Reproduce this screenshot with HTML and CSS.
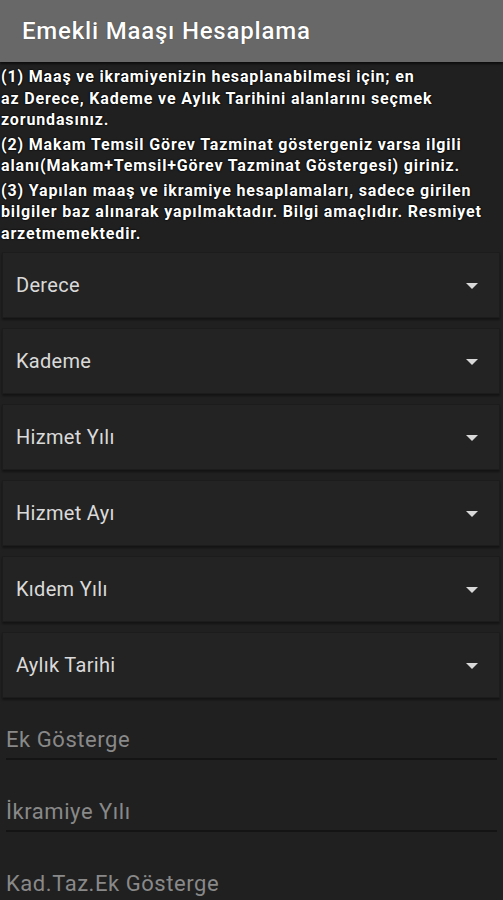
FILE: index.html
```html
<!DOCTYPE html>
<html lang="tr">
<head>
<meta charset="utf-8">
<title>Emekli Maaşı Hesaplama</title>
<link rel="stylesheet" href="styles.css">
</head>
<body>
<header class="appbar">
  <h1 class="appbar-title">Emekli Maaşı Hesaplama</h1>
</header>
<main class="content">
  <section class="info">
    <p>(1) Maaş ve ikramiyenizin hesaplanabilmesi için; en<br>az Derece, Kademe ve Aylık Tarihini alanlarını seçmek<br>zorundasınız.</p>
    <p>(2) Makam Temsil Görev Tazminat göstergeniz varsa ilgili<br>alanı(Makam+Temsil+Görev Tazminat Göstergesi) giriniz.</p>
    <p>(3) Yapılan maaş ve ikramiye hesaplamaları, sadece girilen<br>bilgiler baz alınarak yapılmaktadır. Bilgi amaçlıdır. Resmiyet<br>arzetmemektedir.</p>
  </section>
  <section class="spinners">
    <div class="spinner"><span class="spinner-label">Derece</span><span class="spinner-arrow"></span></div>
    <div class="spinner"><span class="spinner-label">Kademe</span><span class="spinner-arrow"></span></div>
    <div class="spinner"><span class="spinner-label">Hizmet Yılı</span><span class="spinner-arrow"></span></div>
    <div class="spinner"><span class="spinner-label">Hizmet Ayı</span><span class="spinner-arrow"></span></div>
    <div class="spinner"><span class="spinner-label">Kıdem Yılı</span><span class="spinner-arrow"></span></div>
    <div class="spinner"><span class="spinner-label">Aylık Tarihi</span><span class="spinner-arrow"></span></div>
  </section>
  <section class="fields">
    <div class="field"><span class="field-hint">Ek Gösterge</span></div>
    <div class="field"><span class="field-hint">İkramiye Yılı</span></div>
    <div class="field"><span class="field-hint">Kad.Taz.Ek Gösterge</span></div>
  </section>
</main>
</body>
</html>
```
FILE: styles.css
```css
html, body {
  margin: 0;
  padding: 0;
}
body {
  background: #202020;
  font-family: Roboto, "Noto Sans", sans-serif;
  color: #fff;
  width: 503px;
  height: 900px;
  overflow: hidden;
}
.appbar {
  height: 62px;
  background: #686868;
  display: flex;
  align-items: center;
  padding-left: 22px;
  box-shadow: 0 2px 2px rgba(0, 0, 0, 0.6);
  position: relative;
}
.appbar-title {
  margin: 0;
  font-size: 24px;
  font-weight: 500;
  color: #fff;
  letter-spacing: 0.8px;
  text-shadow: 0 0 1px rgba(0, 0, 0, 0.5);
}
.content {
  display: flex;
  flex-direction: column;
}
.info {
  padding: 4px 0 0 1px;
  white-space: nowrap;
}
.info p {
  margin: 0;
  font-size: 16px;
  font-weight: 700;
  line-height: 21.5px;
  letter-spacing: 0.85px;
  color: #fff;
  text-shadow: 0 0 1px #000, 0 0 1px #000, 0 0 2px #000;
}
.info p + p {
  margin-top: 3px;
}
.spinners {
  display: flex;
  flex-direction: column;
  gap: 10px;
  padding: 8px 3px 0 2px;
}
.spinner {
  height: 66px;
  box-sizing: border-box;
  background: #232323;
  border: 1px solid #1c1c1c;
  box-shadow: 0 2px 2px rgba(0, 0, 0, 0.4);
  display: flex;
  align-items: center;
  justify-content: space-between;
  padding: 0 21px 0 13px;
}
.spinner-label {
  font-size: 20px;
  letter-spacing: 0.3px;
  color: #dadada;
}
.spinner-arrow {
  width: 0;
  height: 0;
  border-left: 6px solid transparent;
  border-right: 6px solid transparent;
  border-top: 6px solid #d8d8d8;
  margin-top: 2px;
}
.fields {
  display: flex;
  flex-direction: column;
  gap: 10px;
  padding: 0 6px;
}
.field {
  height: 62px;
  box-sizing: border-box;
  border-bottom: 2px solid #141414;
  display: flex;
  align-items: flex-end;
  padding-bottom: 7px;
}
.field-hint {
  font-size: 22px;
  line-height: 22px;
  letter-spacing: 0.55px;
  color: #898989;
}
```
